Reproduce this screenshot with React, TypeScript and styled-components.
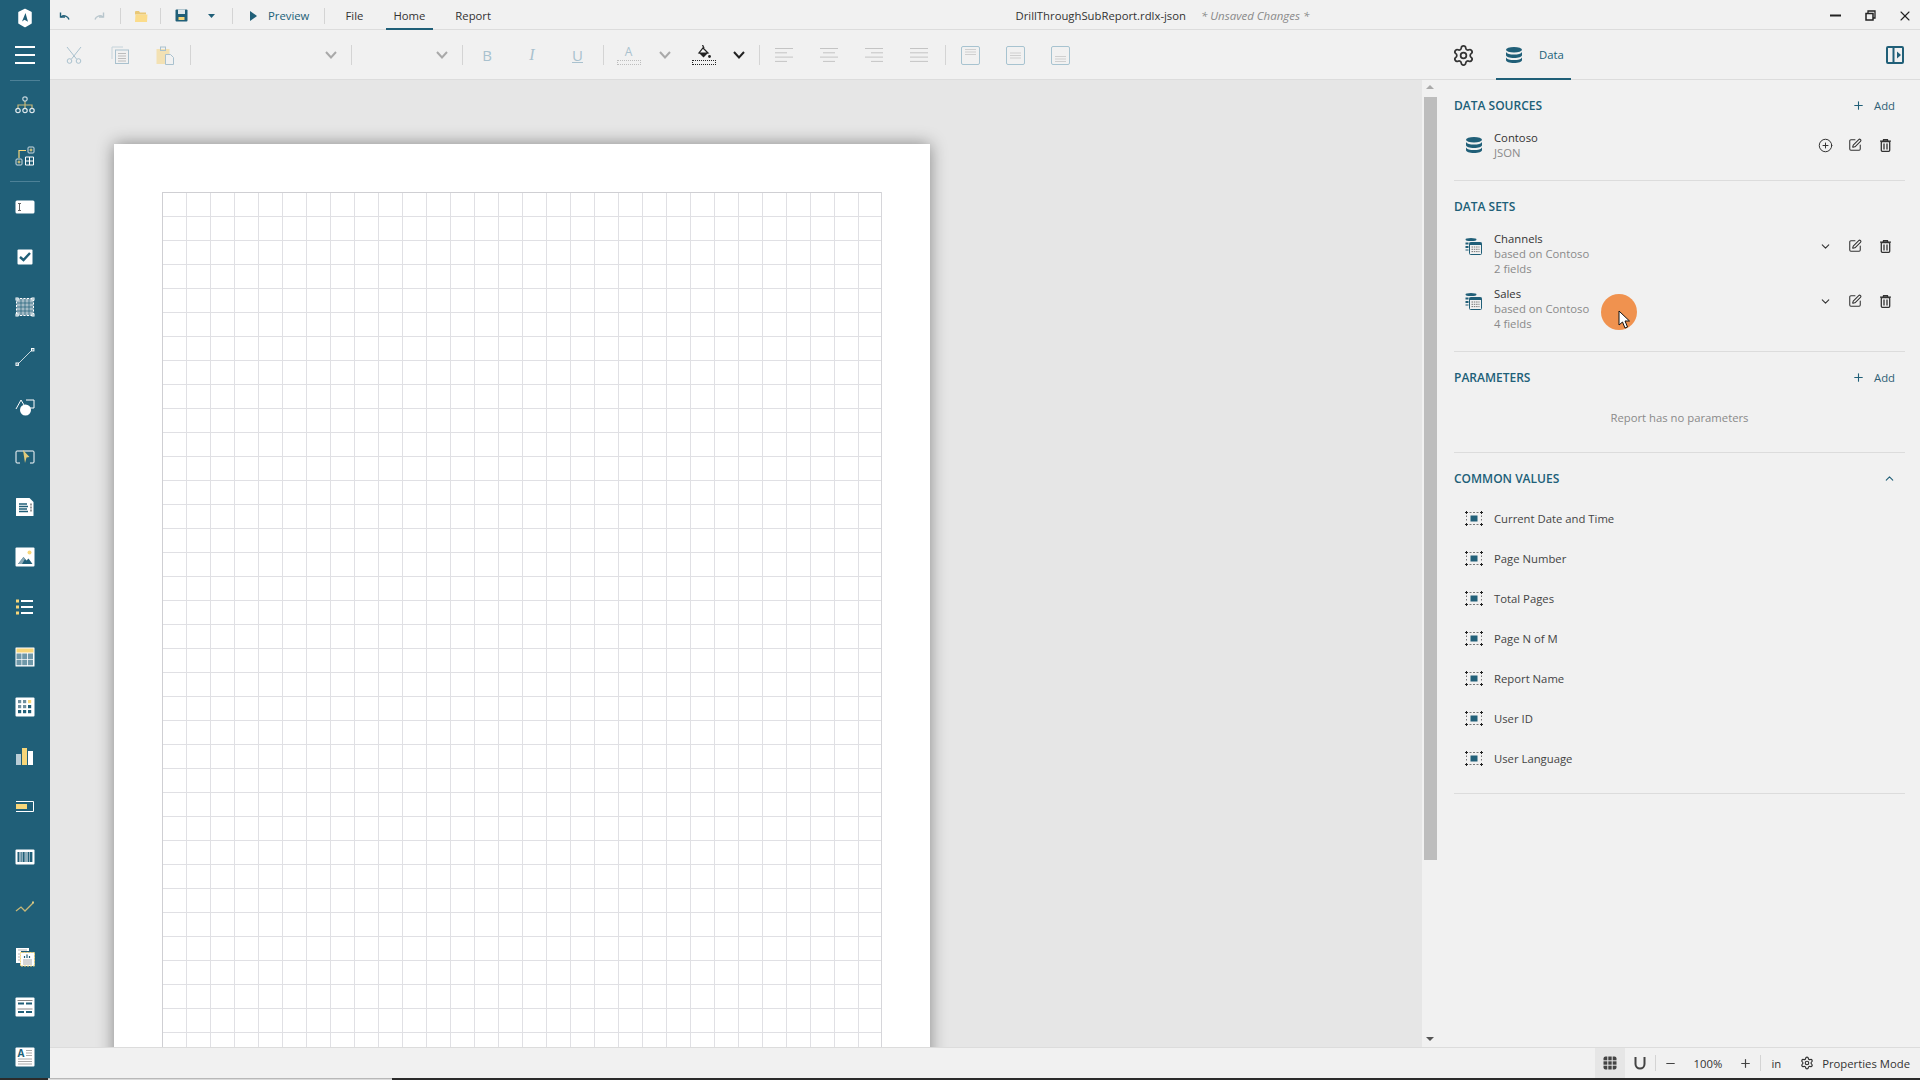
import React from 'react';
import styled, { createGlobalStyle } from 'styled-components';
import { Settings, Plus, ChevronDown, ChevronUp, X, Minus, CirclePlus, SquarePen } from 'lucide-react';

const TEAL = '#205f78';
const YEL = '#f7d679';
const MUTE = '#a9c1ce';

const Global = createGlobalStyle`
  html, body { margin: 0; padding: 0; height: 100%; overflow: hidden; background: #f1f1f1; }
  body { font-family: "Open Sans", "Noto Sans", sans-serif; font-size: 11.3px; color: #333; }
  * { box-sizing: border-box; }
  svg { display: block; flex-shrink: 0; }
`;

const Shell = styled.div`display: flex; flex-direction: column; width: 1920px; height: 1080px; overflow: hidden;`;
const Body = styled.div`display: flex; height: 1078px;`;
const Sidebar = styled.nav`width: 50px; height: 1078px; flex-shrink: 0; background: ${TEAL}; display: flex; flex-direction: column; align-items: center; overflow: hidden;`;
const SideItem = styled.div<{ $h?: number; $mb?: number }>`
  width: 50px; height: ${p => p.$h ?? 50}px; margin-bottom: ${p => p.$mb ?? 0}px; flex-shrink: 0;
  display: flex; align-items: center; justify-content: center;
`;
const SideDivider = styled.div`width: 30px; height: 1px; flex-shrink: 0; background: #4d8197;`;
const Main = styled.div`flex: 1; min-width: 0; display: flex; flex-direction: column;`;

const TitleBar = styled.header`height: 30px; flex-shrink: 0; display: flex; align-items: center; padding-top: 2px; background: #f1f1f1; border-bottom: 1px solid #dcdcdc; position: relative;`;
const ToolBar = styled.div`height: 50px; flex-shrink: 0; display: flex; align-items: center; padding-top: 1px; background: #f1f1f1; border-bottom: 1px solid #dcdcdc;`;
const Tool = styled.div<{ $w: number; $ml?: number; $active?: boolean }>`
  width: ${p => p.$w}px; margin-left: ${p => p.$ml ?? 0}px; height: 100%; flex-shrink: 0;
  display: flex; align-items: center; justify-content: center;
  background: ${p => (p.$active ? '#e6e6e6' : 'transparent')};
`;
const Sep = styled.div<{ $ml?: number; $h?: number }>`
  width: 1px; height: ${p => p.$h ?? 16}px; margin-left: ${p => p.$ml ?? 0}px; background: #d4d4d4; flex-shrink: 0;
`;
const PreviewBtn = styled.div`width: 91px; flex-shrink: 0; display: flex; align-items: center; gap: 11px; padding-left: 17px; color: ${TEAL};`;
const MenuTabs = styled.div`display: flex; gap: 15px; margin: -2px 0 -1px 13px; height: 30px; flex-shrink: 0;`;
const MenuTab = styled.div<{ $active?: boolean }>`
  padding: 2px 7.5px 0; height: 30px; display: flex; align-items: center; color: #333;
  border-bottom: 2px solid ${p => (p.$active ? TEAL : 'transparent')};
`;
const DocTitle = styled.div`margin-left: 517px; color: #333; white-space: nowrap;`;
const Unsaved = styled.div`margin-left: 15px; color: #8a8a8a; font-style: italic; font-size: 11.5px; white-space: nowrap;`;
const WinControls = styled.div`margin-left: auto; display: flex; align-items: center; gap: 24px; padding-right: 7px;`;
const CloseWrap = styled.div`margin-left: -3px;`;
const DropField = styled.div<{ $w: number; $pr: number }>`
  width: ${p => p.$w}px; padding-right: ${p => p.$pr}px; flex-shrink: 0; display: flex; justify-content: flex-end;
`;
const Letter = styled.span<{ $under?: boolean }>`
  font-family: "Open Sans", sans-serif; font-size: 15px; color: ${MUTE};
  text-decoration: ${p => (p.$under ? 'underline' : 'none')};
`;
const SerifItalic = styled.span`font-family: "Liberation Serif", serif; font-style: italic; font-size: 16px; color: ${MUTE};`;
const ColorTool = styled.div`display: flex; flex-direction: column; align-items: center; gap: 1px;`;
const ColorSwatch = styled.div<{ $c: string }>`width: 24px; height: 5px; border: 1px dotted ${p => p.$c};`;
const SmallA = styled.span`font-size: 12px; line-height: 14px; color: ${MUTE};`;
const RightTools = styled.div`margin-left: auto; display: flex; align-items: center; height: 100%; flex: 1;`;
const DataTab = styled.div`
  width: 75px; margin-left: 18px; height: 49px; margin-bottom: -1px; align-self: flex-end; display: flex; align-items: center; gap: 17px; padding-left: 10px;
  color: ${TEAL}; border-bottom: 2px solid ${TEAL};
`;
const ToggleWrap = styled.div`margin-left: auto; padding-right: 16px;`;

const Content = styled.div`flex: 1; min-height: 0; display: flex;`;
const Canvas = styled.main`flex: 1; min-width: 0; background: #e6e6e6; padding: 64px 0 0 64px; overflow: hidden;`;
const Page = styled.div`width: 816px; height: 1000px; background: #fff; padding: 48px; box-shadow: 0 0 16px rgba(0,0,0,.42);`;
const Grid = styled.div`
  width: 720px; height: 904px; border-right: 1px solid #d6d6da;
  background-color: #fff;
  background-image:
    linear-gradient(to right, #e0e0e4 1px, transparent 1px),
    linear-gradient(to bottom, #e0e0e4 1px, transparent 1px);
  background-size: 24px 24px;
  box-shadow: inset 1px 1px 0 #cfcfd3;
`;
const Scroll = styled.div`width: 15px; flex-shrink: 0; background: #f1f1f1; display: flex; flex-direction: column; align-items: center; padding: 5px 0 6px;`;
const Arrow = styled.div<{ $down?: boolean }>`
  width: 0; height: 0; flex-shrink: 0; border-left: 4px solid transparent; border-right: 4px solid transparent;
  ${p => (p.$down ? 'border-top: 4px solid #555; margin-top: auto;' : 'border-bottom: 4px solid #aaa;')}
`;
const Thumb = styled.div`width: 13px; height: 763px; margin: 8px 0 0 2px; background: #bdbdbd; flex-shrink: 0;`;

const Panel = styled.aside`width: 483px; flex-shrink: 0; background: #f1f1f1; padding: 0 15px 0 17px; position: relative;`;
const Section = styled.section<{ $pt: number; $pb: number }>`
  padding: ${p => p.$pt}px 0 ${p => p.$pb}px; border-bottom: 1px solid #dcdcdc;
`;
const SectionHead = styled.div`height: 30px; display: flex; align-items: center; justify-content: space-between;`;
const SectionTitle = styled.h3`margin: 0; font-size: 12px; font-weight: 600; color: ${TEAL};`;
const AddBtn = styled.div`display: flex; align-items: center; gap: 9px; padding-right: 10px; color: #2f5f75;`;
const Collapse = styled.div`padding-right: 9px;`;
const Rows = styled.div`margin-top: 10px; display: flex; flex-direction: column; gap: 10px;`;
const Row = styled.div`display: flex; align-items: flex-start;`;
const IconCell = styled.div<{ $h?: number }>`width: 40px; height: ${p => p.$h ?? 30}px; padding-right: 1px; flex-shrink: 0; display: flex; justify-content: center; align-items: center;`;
const RowText = styled.div`flex: 1; line-height: 15px;`;
const RowName = styled.div`color: #333;`;
const RowSub = styled.div`color: #8a8a8a;`;
const Actions = styled.div`display: flex; padding-right: 5px;`;
const Action = styled.div`width: 30px; height: 30px; display: flex; justify-content: center; align-items: center;`;
const Empty = styled.div`margin: 16px 0 24px; height: 20px; line-height: 20px; text-align: center; color: #8a8a8a;`;
const ValueRows = styled.div`margin-top: 5px; display: flex; flex-direction: column;`;
const ValueRow = styled.div`height: 40px; display: flex; align-items: center; color: #444;`;
const Highlight = styled.div`position: absolute; left: 164px; top: 214px; width: 36px; height: 36px; border-radius: 50%; background: #f0924f;`;
const Pointer = styled.div`position: absolute; left: 181px; top: 230px;`;

const StatusBar = styled.footer`height: 31px; flex-shrink: 0; border-top: 1px solid #dcdcdc; background: #f1f1f1; display: flex; align-items: center; justify-content: flex-end; padding-right: 10px; color: #333;`;
const Zoom = styled.div`width: 45px; text-align: center; flex-shrink: 0;`;
const Unit = styled.div`margin-left: 10px;`;
const StatusGear = styled.div`margin-left: 19px; margin-right: 8px;`;

const Taskbar = styled.div`height: 2px; display: flex; flex-shrink: 0; background: #2b2b2b;`;
const TaskLight = styled.div`width: 344px; margin-left: 48px; background: #dcdcdc; border-top: 1px solid #b8b8b8;`;

type SP = { children: React.ReactNode; w?: number; h?: number; vb?: string };
const S = ({ children, w = 20, h = 20, vb }: SP) => (
  <svg width={w} height={h} viewBox={vb ?? `0 0 ${w} ${h}`} fill="none">{children}</svg>
);

const Logo = () => (
  <S w={16} h={20}>
    <path d="M8 1.500 L14 4.500 V15 L8 18.500 L2 15 V4.500 Z" fill="#fff" stroke="#fff" strokeWidth="1.500" strokeLinejoin="round" />
    <path d="M8.500 5 L5 13.500 L7.500 11.800 L11 13.800 Z" fill={TEAL} />
  </S>
);
const Hamburger = () => (
  <S w={20} h={18}><path d="M0 1h20M0 9h20M0 17h20" stroke="#fff" strokeWidth="2" /></S>
);
const Tree = () => (
  <S>
    <path d="M10 5V9M3 12V9H17V12M10 9V12" stroke="#c8b878" strokeWidth="1.200" />
    <circle cx="10" cy="3" r="2.200" stroke="#c3d4db" strokeWidth="1.200" />
    <circle cx="3" cy="14.500" r="2.200" stroke="#dfe8ec" strokeWidth="1.200" />
    <circle cx="10" cy="14.500" r="2.200" stroke="#dfe8ec" strokeWidth="1.200" />
    <circle cx="17" cy="14.500" r="2.200" stroke="#dfe8ec" strokeWidth="1.200" />
  </S>
);
const Layout = () => (
  <S>
    <path d="M4 12V4.500H11" stroke={YEL} strokeWidth="1.200" />
    <rect x="13" y="1" width="6" height="6" rx="1" stroke="#cfdde3" />
    <path d="M14.500 4H17.500M16 2.500V5.500" stroke={YEL} />
    <rect x="1" y="13" width="6" height="6" rx="1" stroke="#cfdde3" />
    <path d="M2.500 16H5.500M4 14.500V17.500" stroke={YEL} />
    <path d="M10.500 11h8v8h-8zM14.500 11v8M10.500 15h8" stroke="#fff" />
  </S>
);
const TextBox = () => (
  <S><rect x="0.500" y="3.500" width="19" height="13" rx="1.500" fill="#fff" /><path d="M3 6.500h3M3 13.500h3M4.500 6.500v7" stroke="#666" /></S>
);
const CheckBox = () => (
  <S><rect x="2.500" y="2.500" width="15" height="15" rx="1" fill="#fff" /><path d="M5 10l3.500 3L15 6" stroke={TEAL} strokeWidth="2.400" /></S>
);
const Dotted = () => (
  <S>
    <rect x="1.500" y="1.500" width="17" height="17" fill="#a3bac5" />
    <path d="M6 1.500v17M10 1.500v17M14 1.500v17M1.500 6h17M1.500 10h17M1.500 14h17" stroke={TEAL} strokeWidth=".7" />
    <path d="M1.500 1.500h17v17h-17z" stroke="#fff" strokeDasharray="2 1.500" />
    {[[1, 1], [17, 1], [1, 17], [17, 17]].map(([x, y]) => <rect key={x * 100 + y} x={x} y={y} width="2" height="2" fill={TEAL} stroke="#fff" />)}
  </S>
);
const LineTool = () => (
  <S>
    <path d="M2.500 17.500L17.500 2.500" stroke="#c6d6dc" />
    <rect x="1" y="16" width="2.400" height="2.400" stroke="#fff" />
    <rect x="16.500" y="1.500" width="2.400" height="2.400" stroke="#fff" />
  </S>
);
const Shapes = () => (
  <S>
    <path d="M1 12L6 3l3 5" stroke="#fff" />
    <path d="M11 3h8v8h-4" stroke="#fff" />
    <circle cx="10.500" cy="13" r="5.500" fill="#fff" />
  </S>
);
const Container = () => (
  <S>
    <path d="M5 16H2a1 1 0 0 1-1-1V5a1 1 0 0 1 1-1h16a1 1 0 0 1 1 1v10a1 1 0 0 1-1 1h-3" stroke="#fff" />
    <path d="M8 3l6.500 7-3 .5L10 16z" fill={YEL} opacity=".9" />
  </S>
);
const DocIcon = () => (
  <S>
    <path d="M1.500 1h13l4 4v13.500a.5.5 0 0 1-.5.5H1.500a.5.5 0 0 1-.5-.5V1.500a.5.5 0 0 1 .5-.5z" fill="#fff" />
    <path d="M4 7h8M4 9.500h9M4 12h8M4 14.500h9" stroke={TEAL} strokeWidth="1.400" />
    <path d="M15 7.500h2M15 10.500h2M15 13.500h2" stroke="#999" strokeWidth="2" />
  </S>
);
const ImageIcon = () => (
  <S>
    <rect x="0.500" y="0.500" width="19" height="19" rx="1" fill="#fff" />
    <circle cx="14.500" cy="5.500" r="2" fill={YEL} />
    <path d="M3 17l5.500-7 3 3.500 2-2L17.500 17z" fill={TEAL} />
    <path d="M3 17l5.500-7 1.500 2-3 5z" fill="#8aa8b6" />
  </S>
);
const ListIcon = () => (
  <S>
    <path d="M6 4h12M6 10h12M6 16h12" stroke="#fff" strokeWidth="2" />
    <rect x="1" y="2.500" width="3" height="3" fill={YEL} /><rect x="1" y="8.500" width="3" height="3" fill={YEL} /><rect x="1" y="14.500" width="3" height="3" fill={YEL} />
  </S>
);
const TableIcon = () => (
  <S>
    <rect x="0.500" y="0.500" width="19" height="19" rx=".5" fill="#fff" />
    <rect x="1.500" y="1.500" width="17" height="4" fill={YEL} />
    {[1.5, 7.2, 13].map(x => [6.5, 12.7].map(y => <rect key={`${x}${y}`} x={x} y={y} width="5" height="5.500" fill="#6f98a9" />))}
  </S>
);
const Matrix = () => (
  <S>
    <rect x="0.500" y="0.500" width="19" height="19" rx="1" fill="#fff" />
    {[3, 8, 13].map((y, r) => [3, 8, 13].map((x, c) => (
      <rect key={`${r}${c}`} x={x} y={y} width="3.200" height="3.200" fill={r === 0 && c === 2 ? YEL : r === 2 || (r === 1 && c === 2) ? TEAL : '#6f8f9e'} />
    )))}
  </S>
);
const Bars = () => (
  <S>
    <rect x="1" y="7" width="5" height="11" fill="#b9cdd6" />
    <rect x="7" y="1" width="5" height="17" fill={YEL} />
    <rect x="13" y="4" width="5" height="14" fill="#fff" />
  </S>
);
const Bullet = () => (
  <S>
    <path d="M1 4.500h17.500v10H1" stroke="#fff" />
    <rect x="1" y="7" width="11" height="5" fill={YEL} />
  </S>
);
const Barcode = () => (
  <S>
    <rect x="0.500" y="2.500" width="19" height="15" rx="1" fill="#fff" />
    {[[2.5, 2], [5.5, 1.2], [7.5, 2.2], [10.5, 1], [12.5, 2], [15, 2.4]].map(([x, w]) => <rect key={x} x={x} y="5" width={w} height="10" fill={TEAL} />)}
  </S>
);
const Spark = () => (
  <S><path d="M1 14l5-4 4 4 8-8" stroke="#c8b878" strokeWidth="1.300" /><rect x="17" y="4.500" width="2" height="2" fill="#d8c988" /></S>
);
const SubReport = () => (
  <S>
    <path d="M1 1h13v3H6v12H1z" fill="#fff" />
    <path d="M3 3h9M3 7h3M3 10h3M3 13h3" stroke="#b5b5b5" />
    <rect x="5.500" y="5.500" width="14" height="13.500" fill="#fff" stroke={YEL} strokeDasharray="2 1" />
    <path d="M9.500 11V9M12 11V7.500M14.500 11V9" stroke={TEAL} strokeWidth="1.200" />
    <path d="M8 13h9M8 15h9M8 17h9" stroke="#aaa" />
  </S>
);
const FormIcon = () => (
  <S>
    <rect x="0.500" y="0.500" width="19" height="19" rx="1" fill="#fff" />
    <path d="M2.500 3.500h15M2.500 12h15" stroke="#888" />
    <path d="M3 6.500h6M11 6.500h6M3 15h6M11 15h6" stroke={TEAL} strokeWidth="2" />
  </S>
);
const RichIcon = () => (
  <S>
    <rect x="0.500" y="0.500" width="19" height="19" rx="1" fill="#fff" />
    <text x="2.500" y="10" fontFamily="Open Sans, sans-serif" fontWeight="700" fontSize="10" fill={TEAL}>A</text>
    <path d="M11 3.500h6M11 6h6M11 8.500h6M3 12h14M3 14.500h14M3 17h14" stroke="#aaa" />
  </S>
);

const Undo = () => (
  <S w={11} h={10}><path d="M1.500 1.500V6H6" stroke={TEAL} strokeWidth="1.400" /><path d="M2 6a5 5 0 0 1 8 2.500" stroke={TEAL} strokeWidth="1.400" /></S>
);
const Redo = () => (
  <S w={11} h={10}><path d="M9.500 1.500V6H5" stroke="#b8c6cd" strokeWidth="1.400" /><path d="M9 6a5 5 0 0 0-8 2.500" stroke="#b8c6cd" strokeWidth="1.400" /></S>
);
const Folder = () => (
  <S w={14} h={14}><path d="M1 3a1 1 0 0 1 1-1h3l1 1.500h6v2H1z" fill="#e9c877" /><path d="M1 13l.5-7.500h12L13 13z" fill="#fbdc8b" /></S>
);
const Save = () => (
  <S w={13} h={13}>
    <rect x="0.500" y="0.500" width="12" height="12" rx="1" fill={TEAL} />
    <rect x="3" y="0.500" width="7" height="4.500" fill="#dce6ea" /><rect x="3.500" y="8" width="6" height="3" fill={YEL} />
  </S>
);
const Caret = () => (
  <S w={7} h={4}><path d="M0 0h7L3.500 4z" fill={TEAL} /></S>
);
const Play = () => <S w={7} h={10}><path d="M0 0l7 5-7 5z" fill={TEAL} /></S>;
const Restore = () => (
  <S w={11} h={11}><path d="M3 3V1h7v7H8" stroke="#222" strokeWidth="1.300" /><rect x="1" y="3.500" width="7" height="6.500" stroke="#222" strokeWidth="1.500" /></S>
);
const MinBar = () => <S w={11} h={11}><path d="M0 5.500h11" stroke="#222" strokeWidth="2" /></S>;
const Scissors = () => (
  <S w={16} h={18}>
    <path d="M1 1l9.500 12M15 1L5.500 13" stroke={MUTE} />
    <circle cx="3.500" cy="15" r="2.300" stroke={MUTE} /><circle cx="12.500" cy="15" r="2.300" stroke={MUTE} />
  </S>
);
const Copy = () => (
  <S w={18} h={18}>
    <path d="M1 13V1h11" stroke="#c5d3da" />
    <rect x="4.500" y="4" width="13" height="13.500" stroke={MUTE} />
    <path d="M7 7.500h8M7 10h8M7 12.500h8M7 15h8" stroke="#bcbcbc" />
  </S>
);
const Paste = () => (
  <S w={18} h={19}>
    <rect x="0.500" y="3" width="13" height="15" fill="#f3e1b3" />
    <rect x="4.500" y="1" width="5" height="3.500" stroke={MUTE} />
    <path d="M9.500 8.500h5l3 3v7h-8z" fill="#f1f1f1" stroke={MUTE} />
  </S>
);
const Chev = ({ c = '#a9a9a9' }: { c?: string }) => (
  <S w={12} h={8}><path d="M1 1l5 5.500L11 1" stroke={c} strokeWidth="2" /></S>
);
const Bucket = () => (
  <S w={14} h={14}>
    <path d="M5.500 0l1.500 3" stroke="#222" strokeWidth="1.300" />
    <path d="M6 3l5 5H2z" stroke="#222" strokeWidth="1.200" fill="#f1f1f1" />
    <path d="M2 8h9l-4.500 4.500z" fill="#222" />
    <circle cx="12.500" cy="11.500" r="1.400" fill="#222" />
  </S>
);
const Align = ({ mode }: { mode: 'l' | 'c' | 'r' | 'j' }) => {
  const l = [18, 12, 18, 12];
  return (
    <S w={18} h={16}>
      {l.map((len, i) => {
        const w = mode === 'j' ? 18 : len;
        const x = mode === 'c' || mode === 'j' ? (18 - w) / 2 : mode === 'r' ? 18 - w : 0;
        return <path key={i} d={`M${x} ${1.5 + i * 4.3}h${w}`} stroke="#c4c4c4" />;
      })}
    </S>
  );
};
const VAlign = ({ y }: { y: number }) => (
  <S w={19} h={19}>
    <rect x="0.500" y="0.500" width="18" height="18" rx="1.500" stroke="#a7c3d0" />
    {[0, 2.5, 5].map(d => <path key={d} d={`M4 ${y + d}h11`} stroke="#cfcfcf" />)}
  </S>
);
const Db = () => (
  <S w={16} h={16}>
    <ellipse cx="8" cy="2.800" rx="8" ry="2.800" fill={TEAL} />
    <path d="M0 5c1 1.800 4 2.600 8 2.600S15 6.800 16 5v3c0 1.800-3.500 3-8 3S0 9.800 0 8z" fill={TEAL} />
    <path d="M0 10.500c1 1.800 4 2.600 8 2.600s7-.8 8-2.600V13c0 1.800-3.500 3-8 3s-8-1.200-8-3z" fill={TEAL} />
  </S>
);
const PanelToggle = () => (
  <S w={18} h={18}>
    <rect x="1" y="1" width="16" height="16" rx="1" stroke={TEAL} strokeWidth="2" />
    <path d="M7.500 1v16" stroke={TEAL} strokeWidth="2" />
    <path d="M11 5.500L15 9l-4 3.500z" fill={TEAL} />
  </S>
);
const Trash = () => (
  <S w={11} h={13}>
    <path d="M0 2.200h11M3.500 2V.7h4V2" stroke="#333" strokeWidth="1.200" />
    <rect x="1.300" y="2.500" width="8.400" height="9.800" rx="1" stroke="#333" strokeWidth="1.300" />
    <path d="M4 4.500v6M7 4.500v6" stroke="#333" strokeWidth="1.300" />
  </S>
);
const DataSet = () => (
  <S w={17} h={17}>
    <ellipse cx="6" cy="1.500" rx="5.500" ry="1.500" fill={TEAL} />
    <path d="M0.500 4.500h3v2h-3zM0.500 8h3v2h-3zM0.500 11.500h3v1h-3z" fill={TEAL} />
    <rect x="4.500" y="4.500" width="12" height="12" rx="1" fill="#f1f1f1" stroke={TEAL} />
    <rect x="4.500" y="4.500" width="12" height="2.500" fill={TEAL} />
    <path d="M6.500 9h8M6.500 11.300h8M6.500 13.600h8" stroke="#777" strokeDasharray="1.500 .8" />
  </S>
);
const FieldIcon = () => (
  <S w={18} h={15}>
    <path d="M0 1.500h3M1.500 0v3M15 1.500h3M16.500 0v3M0 13.500h3M1.500 12v3M15 13.500h3M16.500 12v3" stroke="#222" />
    <path d="M4.500 1.500h2M8 1.500h2M11.500 1.500h2M4.500 13.500h2M8 13.500h2M11.500 13.500h2M1.500 4.500v1.500M1.500 8v1.500M16.500 4.500v1.500M16.500 8v1.500" stroke="#777" />
    <rect x="5.500" y="4.500" width="7" height="6" fill={TEAL} />
  </S>
);
const GridIcon = () => (
  <S w={14} h={14}>
    <rect x="0.500" y="0.500" width="13" height="13" rx="2" fill="#444" />
    <path d="M4.800 0v14M9.200 0v14M0 4.800h14M0 9.200h14" stroke="#e6e6e6" />
  </S>
);
const Magnet = () => (
  <S w={12} h={13}>
    <path d="M1.500 0v7a4.500 4.500 0 0 0 9 0V0" stroke="#444" strokeWidth="2" />
  </S>
);
const Cursor = () => (
  <S w={13} h={20}>
    <path d="M1 1v14l3.500-3 2.500 6 2.500-1-2.500-6h4.500z" fill="#fff" stroke="#111" strokeWidth="1" strokeLinejoin="round" />
  </S>
);

const sideTop = [<Tree />, <Layout />];
const sideRest = [<TextBox />, <CheckBox />, <Dotted />, <LineTool />, <Shapes />, <Container />, <DocIcon />, <ImageIcon />, <ListIcon />, <TableIcon />, <Matrix />, <Bars />, <Bullet />, <Barcode />, <Spark />, <SubReport />, <FormIcon />, <RichIcon />];
const commonValues = ['Current Date and Time', 'Page Number', 'Total Pages', 'Page N of M', 'Report Name', 'User ID', 'User Language'];
const dataSets = [{ name: 'Channels', fields: '2 fields' }, { name: 'Sales', fields: '4 fields' }];

export default function App() {
  return (
    <Shell>
      <Global />
      <Body>
        <Sidebar>
          <SideItem $h={36}><Logo /></SideItem>
          <SideItem $h={38} $mb={6}><Hamburger /></SideItem>
          <SideDivider />
          {sideTop.map((icon, i) => <SideItem key={i}>{icon}</SideItem>)}
          <SideDivider />
          {sideRest.map((icon, i) => <SideItem key={i}>{icon}</SideItem>)}
        </Sidebar>
        <Main>
          <TitleBar>
            <Tool $w={29}><Undo /></Tool>
            <Tool $w={41}><Redo /></Tool>
            <Sep />
            <Tool $w={39}><Folder /></Tool>
            <Sep />
            <Tool $w={41}><Save /></Tool>
            <Tool $w={19}><Caret /></Tool>
            <Sep $ml={11} />
            <PreviewBtn><Play />Preview</PreviewBtn>
            <Sep />
            <MenuTabs>
              <MenuTab>File</MenuTab>
              <MenuTab $active>Home</MenuTab>
              <MenuTab>Report</MenuTab>
            </MenuTabs>
            <DocTitle>DrillThroughSubReport.rdlx-json</DocTitle>
            <Unsaved>* Unsaved Changes *</Unsaved>
            <WinControls><MinBar /><Restore /><CloseWrap><X size={16} color="#222" strokeWidth={1.6} /></CloseWrap></WinControls>
          </TitleBar>
          <ToolBar>
            <Tool $w={48}><Scissors /></Tool>
            <Tool $w={44}><Copy /></Tool>
            <Tool $w={45}><Paste /></Tool>
            <Sep $ml={3} $h={20} />
            <DropField $w={160} $pr={14}><Chev /></DropField>
            <Sep $h={20} />
            <DropField $w={110} $pr={14}><Chev /></DropField>
            <Sep $h={20} />
            <Tool $w={48}><Letter>B</Letter></Tool>
            <Tool $w={42}><SerifItalic>I</SerifItalic></Tool>
            <Tool $w={49}><Letter $under>U</Letter></Tool>
            <Sep $ml={1} $h={20} />
            <Tool $w={49}><ColorTool><SmallA>A</SmallA><ColorSwatch $c="#bdbdbd" /></ColorTool></Tool>
            <Tool $w={23}><Chev /></Tool>
            <Tool $w={56}><ColorTool><Bucket /><ColorSwatch $c="#222" /></ColorTool></Tool>
            <Tool $w={14}><Chev c="#222" /></Tool>
            <Sep $ml={13} $h={20} />
            <Tool $w={48}><Align mode="l" /></Tool>
            <Tool $w={42}><Align mode="c" /></Tool>
            <Tool $w={48}><Align mode="r" /></Tool>
            <Tool $w={41}><Align mode="j" /></Tool>
            <Sep $ml={6} $h={20} />
            <Tool $w={49}><VAlign y={3.5} /></Tool>
            <Tool $w={41}><VAlign y={7} /></Tool>
            <Tool $w={49}><VAlign y={10.5} /></Tool>
            <RightTools>
              <Tool $w={30} $ml={363}><Settings size={23} color="#333" strokeWidth={1.8} /></Tool>
              <DataTab><Db />Data</DataTab>
              <ToggleWrap><PanelToggle /></ToggleWrap>
            </RightTools>
          </ToolBar>
          <Content>
            <Canvas>
              <Page><Grid /></Page>
            </Canvas>
            <Scroll>
              <Arrow />
              <Thumb />
              <Arrow $down />
            </Scroll>
            <Panel>
              <Section $pt={10} $pb={20}>
                <SectionHead>
                  <SectionTitle>DATA SOURCES</SectionTitle>
                  <AddBtn><Plus size={13} color={TEAL} strokeWidth={2} />Add</AddBtn>
                </SectionHead>
                <Rows>
                  <Row>
                    <IconCell><Db /></IconCell>
                    <RowText><RowName>Contoso</RowName><RowSub>JSON</RowSub></RowText>
                    <Actions>
                      <Action><CirclePlus size={15} color="#333" strokeWidth={1.6} /></Action>
                      <Action><SquarePen size={14} color="#333" strokeWidth={1.8} /></Action>
                      <Action><Trash /></Action>
                    </Actions>
                  </Row>
                </Rows>
              </Section>
              <Section $pt={10} $pb={20}>
                <SectionHead><SectionTitle>DATA SETS</SectionTitle></SectionHead>
                <Rows>
                  {dataSets.map(d => (
                    <Row key={d.name}>
                      <IconCell><DataSet /></IconCell>
                      <RowText>
                        <RowName>{d.name}</RowName>
                        <RowSub>based on Contoso</RowSub>
                        <RowSub>{d.fields}</RowSub>
                      </RowText>
                      <Actions>
                        <Action><ChevronDown size={13} color="#333" strokeWidth={2} /></Action>
                        <Action><SquarePen size={14} color="#333" strokeWidth={1.8} /></Action>
                        <Action><Trash /></Action>
                      </Actions>
                    </Row>
                  ))}
                </Rows>
              </Section>
              <Section $pt={10} $pb={0}>
                <SectionHead>
                  <SectionTitle>PARAMETERS</SectionTitle>
                  <AddBtn><Plus size={13} color={TEAL} strokeWidth={2} />Add</AddBtn>
                </SectionHead>
                <Empty>Report has no parameters</Empty>
              </Section>
              <Section $pt={10} $pb={15}>
                <SectionHead>
                  <SectionTitle>COMMON VALUES</SectionTitle>
                  <Collapse><ChevronUp size={13} color={TEAL} strokeWidth={2} /></Collapse>
                </SectionHead>
                <ValueRows>
                  {commonValues.map(v => (
                    <ValueRow key={v}><IconCell $h={40}><FieldIcon /></IconCell>{v}</ValueRow>
                  ))}
                </ValueRows>
              </Section>
              <Highlight />
              <Pointer><Cursor /></Pointer>
            </Panel>
          </Content>
          <StatusBar>
            <Tool $w={30} $active><GridIcon /></Tool>
            <Tool $w={30}><Magnet /></Tool>
            <Sep $h={16} />
            <Tool $w={29}><Minus size={13} color="#444" strokeWidth={2} /></Tool>
            <Zoom>100%</Zoom>
            <Tool $w={30}><Plus size={13} color="#444" strokeWidth={2.2} /></Tool>
            <Sep $h={16} />
            <Unit>in</Unit>
            <StatusGear><Settings size={14} color="#333" strokeWidth={2} /></StatusGear>
            Properties Mode
          </StatusBar>
        </Main>
      </Body>
      <Taskbar><TaskLight /></Taskbar>
    </Shell>
  );
}
